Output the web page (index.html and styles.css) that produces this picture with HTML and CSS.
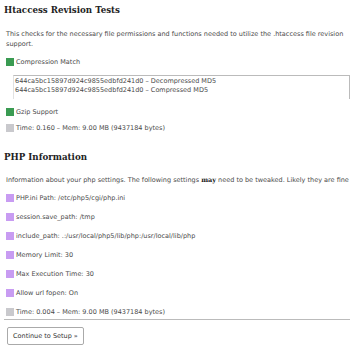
FILE: index.html
```html
<!DOCTYPE html>
<html lang="en">
<head>
  <meta charset="UTF-8" />
  <title>Setup Checks</title>
  <link rel="stylesheet" href="styles.css">
</head>
<body>

  <!-- ======= HTACCESS ======= -->
  <h2>Htaccess Revision Tests</h2>
  <p class="intro">This checks for the necessary file permissions and functions needed to utilize the .htaccess file revision support.</p>

  <div class="check"><span class="box ok"></span>Compression Match</div>
  <div class="hashes">
    <div>644ca5bc15897d924c9855edbfd241d0 &ndash; Decompressed MD5</div>
    <div>644ca5bc15897d924c9855edbfd241d0 &ndash; Compressed MD5</div>
  </div>
  <div class="check gzip"><span class="box ok"></span>Gzip Support</div>
  <div class="check time"><span class="box none"></span>Time: 0.160 &ndash; Mem: 9.00 MB (9437184 bytes)</div>

  <!-- ======= PHP INFO ======= -->
  <h2 class="php">PHP Information</h2>
  <p class="intro single">Information about your php settings. The following settings <b>may</b> need to be tweaked. Likely they are fine</p>

  <div class="info-list">
    <div class="check"><span class="box info"></span>PHP.ini Path: /etc/php5/cgi/php.ini</div>
    <div class="check"><span class="box info"></span>session.save_path: /tmp</div>
    <div class="check"><span class="box info"></span>include_path: .:/usr/local/php5/lib/php:/usr/local/lib/php</div>
    <div class="check"><span class="box info"></span>Memory Limit: 30</div>
    <div class="check"><span class="box info"></span>Max Execution Time: 30</div>
    <div class="check"><span class="box info"></span>Allow url fopen: On</div>
    <div class="check"><span class="box none"></span>Time: 0.004 &ndash; Mem: 9.00 MB (9437184 bytes)</div>
  </div>

  <hr>
  <button class="btn">Continue to Setup &raquo;</button>

</body>
</html>
```

FILE: styles.css
```css
body {
  font-family: 'DejaVu Sans', sans-serif;
  font-size: 6.5px;
  line-height: 10px;
  color: #4a4a4a;
  margin: 0;
  padding: 0 0 0 4px;
  background: #fff;
}

h2 {
  font-family: 'DejaVu Serif', serif;
  font-weight: bold;
  font-size: 8.7px;
  line-height: 12px;
  color: #222;
  margin: 0;
  padding-top: 4px;
}

h2.php {
  margin-top: 18px;
  padding-top: 0;
}

.intro {
  margin: 13px 0 0 0;
  padding-left: 2px;
}

.intro.single {
  margin-top: 12px;
}

.intro b {
  font-family: 'DejaVu Serif', serif;
  color: #222;
}

/* ===== STATUS ROWS ===== */
.check {
  display: flex;
  align-items: center;
  gap: 2px;
  padding-left: 2px;
  margin-top: 8px;
}

.box {
  width: 8px;
  height: 8px;
  flex-shrink: 0;
}

.box.ok { background: #3a9b52; }
.box.info { background: #c89cf2; }
.box.none { background: #c9c9cd; }

.hashes {
  margin: 8px 0 0 9px;
  padding: 1px 0 4px 1px;
  border-top: 1px solid #bbb;
  border-right: 1px solid #bbb;
  border-left: 1px solid #e2e2e2;
  line-height: 9px;
}

.check.gzip { margin-top: 8px; }
.check.time { margin-top: 6px; }

.info-list .check { margin-top: 9px; }
.info-list .check:first-child { margin-top: 8px; }

hr {
  border: none;
  border-top: 1px solid #bbb;
  margin: 2px 0 0 0;
}

.btn {
  font-family: 'DejaVu Sans', sans-serif;
  font-size: 6.5px;
  color: #333;
  background: #fff;
  border: 1px solid #aaa;
  border-radius: 2px;
  padding: 0 5px;
  height: 18px;
  margin: 7px 0 0 3px;
}
```
